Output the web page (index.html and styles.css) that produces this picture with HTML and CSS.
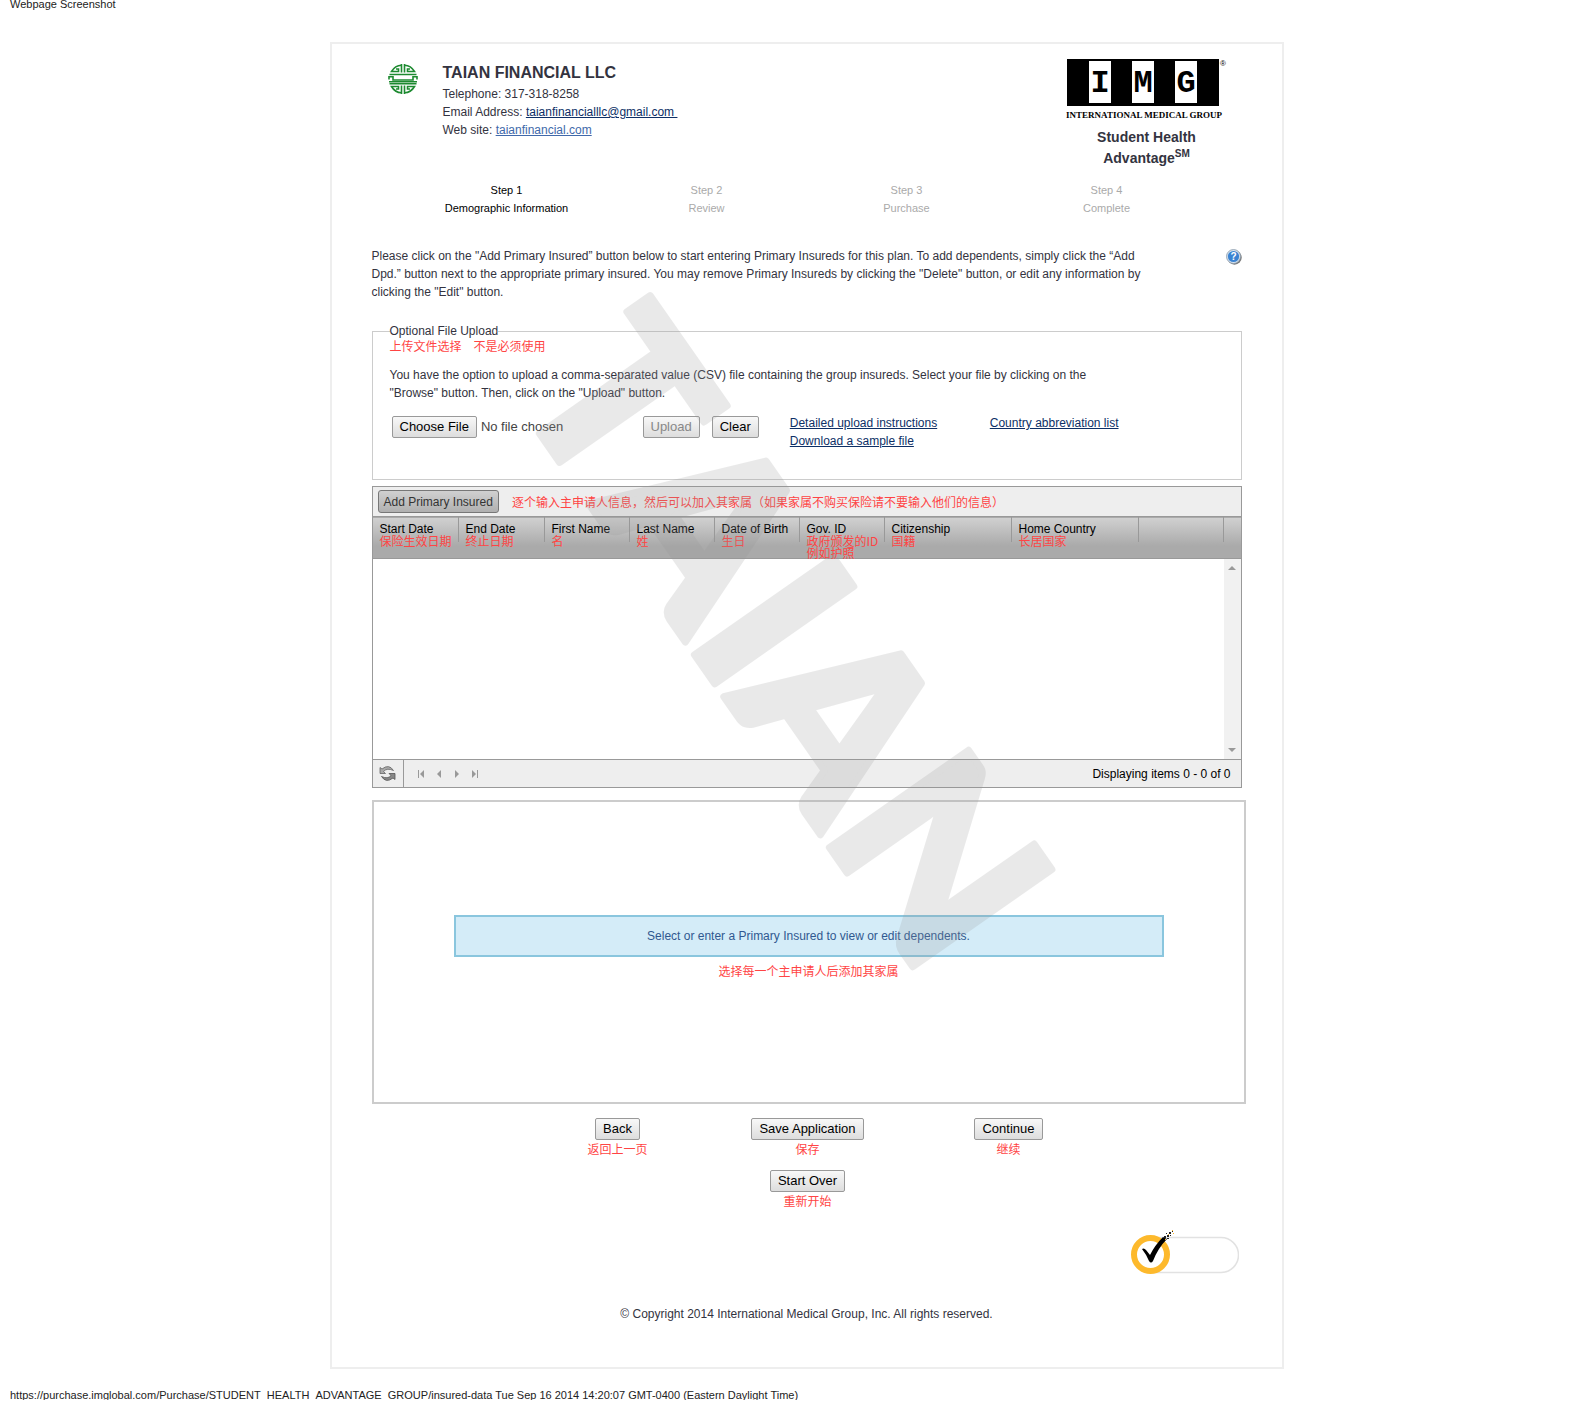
FILE: index.html
```html
<!DOCTYPE html>
<html lang="en">
<head>
<meta charset="utf-8">
<title>Webpage Screenshot</title>
<link rel="stylesheet" href="styles.css">
</head>
<body>
<div class="print-line print-head">Webpage Screenshot</div>
<main class="sheet">
  <header class="top">
    <svg class="seal" viewBox="0 0 30 30" width="30" height="30" aria-hidden="true">
      <g fill="none" stroke="#1d8a30" stroke-width="1.6">
        <path d="M13.5 0v8.500M16.500 0v8.500M13.500 30v-8.500M16.500 30v-8.500"/>
        <path d="M13.500 1.200Q7 1.500 3.500 7.500H10.500V5H8"/>
        <path d="M16.500 1.200Q23 1.500 26.500 7.500H19.500V5H22"/>
        <path d="M13.500 28.800Q7 28.500 3.500 22.500H10.500V25H8"/>
        <path d="M16.500 28.800Q23 28.500 26.500 22.500H19.500V25H22"/>
        <path d="M1.500 10.500H28.500M1 15.500V12.800H5V16H25V12.800H29V15.500M1.500 19.800H28.500M1 17.800H29"/>
      </g>
    </svg>
    <div class="agency">
      <h1>TAIAN FINANCIAL LLC</h1>
      <p>Telephone: 317-318-8258</p>
      <p>Email Address: <a href="mailto:taianfinancialllc@gmail.com">taianfinancialllc@gmail.com&nbsp;</a></p>
      <p>Web site: <a class="visited" href="#site">taianfinancial.com</a></p>
    </div>
    <div class="brand">
      <svg viewBox="0 0 162 62" width="162" height="62" role="img" aria-label="International Medical Group">
        <rect x="1" width="152" height="47" fill="#000"/>
        <path d="M23 2h22v42H23zM66 2h22v42H66zM109 2h22v42h-22z" fill="#fff"/>
        <g class="logo-letters" text-anchor="middle"><text x="34" y="33">I</text><text x="77" y="33">M</text><text x="120" y="33">G</text></g>
        <text class="logo-name" x="78" y="59" text-anchor="middle">INTERNATIONAL MEDICAL GROUP</text>
        <text class="logo-reg" x="154" y="7">®</text>
      </svg>
      <h2>Student Health<br>Advantage<sup>SM</sup></h2>
    </div>
  </header>

  <ol class="steps">
    <li class="current">Step 1<br>Demographic Information</li>
    <li>Step 2<br>Review</li>
    <li>Step 3<br>Purchase</li>
    <li>Step 4<br>Complete</li>
  </ol>

  <section class="intro">
    <p>Please click on the "Add Primary Insured” button below to start entering Primary Insureds for this plan. To add dependents, simply click the “Add<br>Dpd.” button next to the appropriate primary insured. You may remove Primary Insureds by clicking the "Delete" button, or edit any information by<br>clicking the "Edit" button.</p>
    <button class="help" type="button" aria-label="Help">
      <svg viewBox="0 0 16 16" width="16" height="16">
        <circle cx="8.500" cy="8.500" r="7.200" fill="#777"/>
        <circle cx="7.500" cy="7.500" r="7" fill="#d5e2ee" stroke="#8a9aab" stroke-width=".8"/>
        <circle cx="7.500" cy="7.500" r="5.600" fill="#3b83d2"/>
        <text class="help-mark" x="7.500" y="11" text-anchor="middle">?</text>
      </svg>
    </button>
  </section>

  <fieldset class="upload">
    <legend>Optional File Upload</legend>
    <p class="note">上传文件选择　不是必须使用</p>
    <p class="upload-text">You have the option to upload a comma-separated value (CSV) file containing the group insureds. Select your file by clicking on the<br>"Browse" button. Then, click on the "Upload" button.</p>
    <div class="upload-row">
      <input class="file" type="file" aria-label="Group insureds file">
      <button class="btn" type="button" disabled>Upload</button>
      <button class="btn" type="button">Clear</button>
      <div class="links">
        <a href="#instructions">Detailed upload instructions</a>
        <a href="#countries">Country abbreviation list</a>
        <a href="#sample">Download a sample file</a>
      </div>
    </div>
  </fieldset>

  <section class="grid">
    <div class="toolbar">
      <button class="add" type="button">Add Primary Insured</button>
      <span class="note">逐个输入主申请人信息，然后可以加入其家属（如果家属不购买保险请不要输入他们的信息）</span>
    </div>
    <table>
      <colgroup><col class="c-date"><col class="c-date"><col class="c-std"><col class="c-std"><col class="c-std"><col class="c-std"><col class="c-wide"><col class="c-wide"><col class="c-std"><col></colgroup>
      <thead>
        <tr>
          <th><div>Start Date<span class="note">保险生效日期</span></div></th>
          <th><div>End Date<span class="note">终止日期</span></div></th>
          <th><div>First Name<span class="note">名</span></div></th>
          <th><div>Last Name<span class="note">姓</span></div></th>
          <th><div>Date of Birth<span class="note">生日</span></div></th>
          <th><div>Gov. ID<span class="note">政府颁发的ID<br>例如护照</span></div></th>
          <th><div>Citizenship<span class="note">国籍</span></div></th>
          <th><div>Home Country<span class="note">长居国家</span></div></th>
          <th><div></div></th>
          <th></th>
        </tr>
      </thead>
    </table>
    <div class="rows">
      <div class="scroll">
        <svg viewBox="0 0 8 4" width="8" height="4"><path d="M0 4L4 0l4 4z"/></svg>
        <svg viewBox="0 0 8 4" width="8" height="4"><path d="M0 0l4 4 4-4z"/></svg>
      </div>
    </div>
    <div class="pager">
      <button class="refresh" type="button" aria-label="Refresh">
        <svg viewBox="0 0 17 17" width="17" height="17">
          <path d="M1 2.500V8.500H6.500L4.500 6.500Q8 2.500 14.500 5.500Q10-1.500 3 4z" fill="#aaa" stroke="#666" stroke-width=".8"/>
          <path d="M16 14.500V8.500H10L12 10.500Q9 14.500 2.500 11.500Q7 18.500 14 13z" fill="#888" stroke="#555" stroke-width=".8"/>
        </svg>
      </button>
      <div class="pages">
        <button type="button" aria-label="First page"><svg viewBox="0 0 8 8" width="8" height="8"><path d="M0 0h1v8H0zM6 0v8L2 4z"/></svg></button>
        <button type="button" aria-label="Previous page"><svg viewBox="0 0 8 8" width="8" height="8"><path d="M5 0v8L1 4z"/></svg></button>
        <button type="button" aria-label="Next page"><svg viewBox="0 0 8 8" width="8" height="8"><path d="M1 0v8l4-4z"/></svg></button>
        <button type="button" aria-label="Last page"><svg viewBox="0 0 8 8" width="8" height="8"><path d="M0 0v8l4-4zM5 0h1v8H5z"/></svg></button>
      </div>
      <span class="count">Displaying items 0 - 0 of 0</span>
    </div>
  </section>

  <section class="dependents">
    <p class="info">Select or enter a Primary Insured to view or edit dependents.</p>
    <p class="note">选择每一个主申请人后添加其家属</p>
  </section>

  <div class="actions">
    <div><button class="btn" type="button">Back</button><span class="note">返回上一页</span></div>
    <div><button class="btn" type="button">Save Application</button><span class="note">保存</span></div>
    <div><button class="btn" type="button">Continue</button><span class="note">继续</span></div>
    <div class="restart"><button class="btn" type="button">Start Over</button><span class="note">重新开始</span></div>
  </div>

  <svg class="trust" viewBox="0 0 108 45" width="108" height="45" aria-hidden="true">
    <path d="M20 7.500H90a17.500 17.500 0 0 1 0 35H20" fill="#fff" stroke="#e2e2e2" stroke-width="1.500"/>
    <circle cx="19.500" cy="24.500" r="16.500" fill="#fff" stroke="#fdb92c" stroke-width="6"/>
    <path d="M11 19q2-1.500 4 1l4 5Q24 15 32 7l4 2Q27 18 22 31q-2 3-4 0Q15 24 11 19z" fill="#000"/>
    <path d="M33 6h2v2h-2zM36 5h2v2h-2zM35 3h1v1h-1zM38 2h2v2h-2zM39 5h1v1h-1zM36 8h2v1h-2zM41 1h1v1h-1z" fill="#222"/>
    <path d="M37 4h1v1h-1zM42 3h1v1h-1zM41 0h1v1h-1zM34 9h1v1h-1z" fill="#fdb92c"/>
  </svg>

  <footer class="copyright">© Copyright 2014 International Medical Group, Inc. All rights reserved.</footer>

  <svg class="watermark" viewBox="0 0 950 1000" width="950" height="1000" aria-hidden="true">
    <text transform="translate(177 346) rotate(55)">TAIAN</text>
  </svg>
</main>
<div class="print-line print-foot">https://purchase.imglobal.com/Purchase/STUDENT_HEALTH_ADVANTAGE_GROUP/insured-data Tue Sep 16 2014 14:20:07 GMT-0400 (Eastern Daylight Time)</div>
</body>
</html>
```
FILE: styles.css
```css
* { box-sizing: border-box; }

body {
  margin: 0;
  background: #fff;
  color: #333340;
  font: 12px/18px "Liberation Sans", "Noto Sans CJK SC", sans-serif;
}

p, h1, h2, ol { margin: 0; padding: 0; }
button { font-family: inherit; cursor: pointer; }
a { color: #0d2f66; }
a.visited { color: #4169aa; }

.print-line { padding: 0 10px; font-size: 11px; line-height: 10px; color: #222; }
.print-head { line-height: 8px; padding-bottom: 34px; }
.print-foot { padding-top: 21px; }

.note {
  color: #ff4444;
  font-size: 12px;
  line-height: 12px;
  font-family: "Noto Sans CJK SC", sans-serif;
}

.sheet {
  position: relative;
  max-width: 954px;
  margin: 0 auto;
  left: 15px;
  padding: 15px 40px 44px;
  border: 2px solid #eee;
}

/* Agency and product header */
.top { display: flex; align-items: flex-start; padding-left: 16px; }
.seal { margin-top: 5px; }
.agency { flex: 1; padding: 4px 0 0 25px; }
.agency h1 { margin-bottom: 2px; font-size: 16px; line-height: 20px; }
.brand { width: 162px; margin-right: 14px; text-align: center; }
.brand svg { display: block; margin-bottom: 6px; }
.brand h2 { font-size: 14px; line-height: 21px; }
.brand sup { font-size: 10px; line-height: 10px; }
.logo-letters { font: bold 32px "Liberation Mono", monospace; }
.logo-name { font: bold 9px "Liberation Serif", serif; }
.logo-reg { font: 8px "Liberation Sans", sans-serif; }

.steps {
  display: grid;
  grid-template-columns: repeat(4, 200px);
  justify-content: center;
  margin-top: 12px;
  list-style: none;
  text-align: center;
  font-size: 11px;
  color: #aaa;
}
.steps .current { color: #000; }

.intro { display: flex; justify-content: space-between; align-items: flex-start; margin-top: 30px; }
.help { margin-top: 2px; padding: 0; border: 0; background: none; line-height: 0; }
.help-mark { font: bold 10px "Liberation Sans", sans-serif; fill: #fff; }

/* CSV upload */
.upload { min-height: 158px; margin: 21px 0 0; padding: 0 17px; border: 1px solid #ccc; }
.upload legend { padding: 0; }
.upload-text { margin: 14px 0; }
.upload-row { display: flex; align-items: flex-start; padding-left: 2px; }
.file { width: 251px; font: 13px/18px "Liberation Sans", sans-serif; color: #444; }

.btn, .file::file-selector-button {
  height: 22px;
  margin: 0;
  padding: 0 7px;
  border: 1px solid #999;
  border-radius: 2px;
  background: linear-gradient(#f8f8f8, #ddd);
  color: #000;
  font: 13px/18px "Liberation Sans", sans-serif;
}
.file::file-selector-button { margin-right: 4px; }
.btn:disabled { color: #888; }
.upload-row .btn + .btn { margin-left: 12px; }
.links { display: grid; grid-template-columns: 200px 200px; margin: -2px 0 0 31px; justify-items: start; }

/* Insured grid */
.grid { margin-top: 6px; border: 1px solid #999; }
.toolbar { display: flex; align-items: center; gap: 13px; height: 29px; padding: 0 5px; background: #eee; }
.add {
  height: 23px;
  padding: 0 5px;
  border: 1px solid #777;
  border-radius: 3px;
  background: linear-gradient(#d0d0d0, #b0b0b0);
  color: #333;
  font-size: 12px;
}
.grid table { width: 100%; table-layout: fixed; border-collapse: collapse; }
.c-date { width: 86px; }
.c-std { width: 85px; }
.c-wide { width: 127px; }
.grid thead {
  border-top: 1px solid #999;
  border-bottom: 1px solid #999;
  background: linear-gradient(#d0d0d0, #aaa 70%);
}
.grid th { height: 42px; padding: 0; vertical-align: top; text-align: left; font-weight: normal; color: #000; }
.grid th div { position: relative; height: 25px; padding: 3px 0 0 7px; border-right: 1px solid #999; }
.grid th .note { position: absolute; left: 7px; top: 18px; white-space: nowrap; }
.rows { display: flex; justify-content: flex-end; height: 200px; }
.scroll {
  display: flex;
  flex-direction: column;
  align-items: center;
  justify-content: space-between;
  width: 17px;
  padding: 7px 0;
  background: #f1f1f1;
  fill: #999;
}
.pager { display: flex; align-items: center; height: 28px; border-top: 1px solid #999; background: #eee; color: #000; }
.pager button { display: flex; padding: 0; border: 0; background: none; fill: #999; }
.pager .refresh { align-items: center; justify-content: center; width: 31px; height: 27px; border-right: 1px solid #999; }
.pages { display: flex; flex: 1; gap: 10px; padding-left: 14px; }
.count { padding-right: 10px; }

.dependents { min-height: 304px; margin: 12px -4px 0 0; padding: 113px 80px; border: 2px solid #ccc; text-align: center; }
.info { margin-bottom: 8px; padding: 10px; border: 2px solid #8ac6de; background: #d4ecf8; color: #305890; }

.actions {
  display: grid;
  grid-template-columns: 190px 190px 212px;
  row-gap: 15px;
  padding: 14px 0 0 151px;
}
.actions div { display: flex; flex-direction: column; align-items: center; gap: 3px; }
.actions .restart { grid-column: 2; }

.trust { display: block; margin: 23px 3px 0 auto; }
.copyright { margin-top: 30px; text-align: center; }

.watermark { position: absolute; left: 0; top: 0; pointer-events: none; }
.watermark text {
  font: 900 234px Lato, sans-serif;
  font-kerning: none;
  fill: #969696;
  stroke: #969696;
  stroke-width: 7px;
  stroke-linejoin: round;
  opacity: .2;
}
```
